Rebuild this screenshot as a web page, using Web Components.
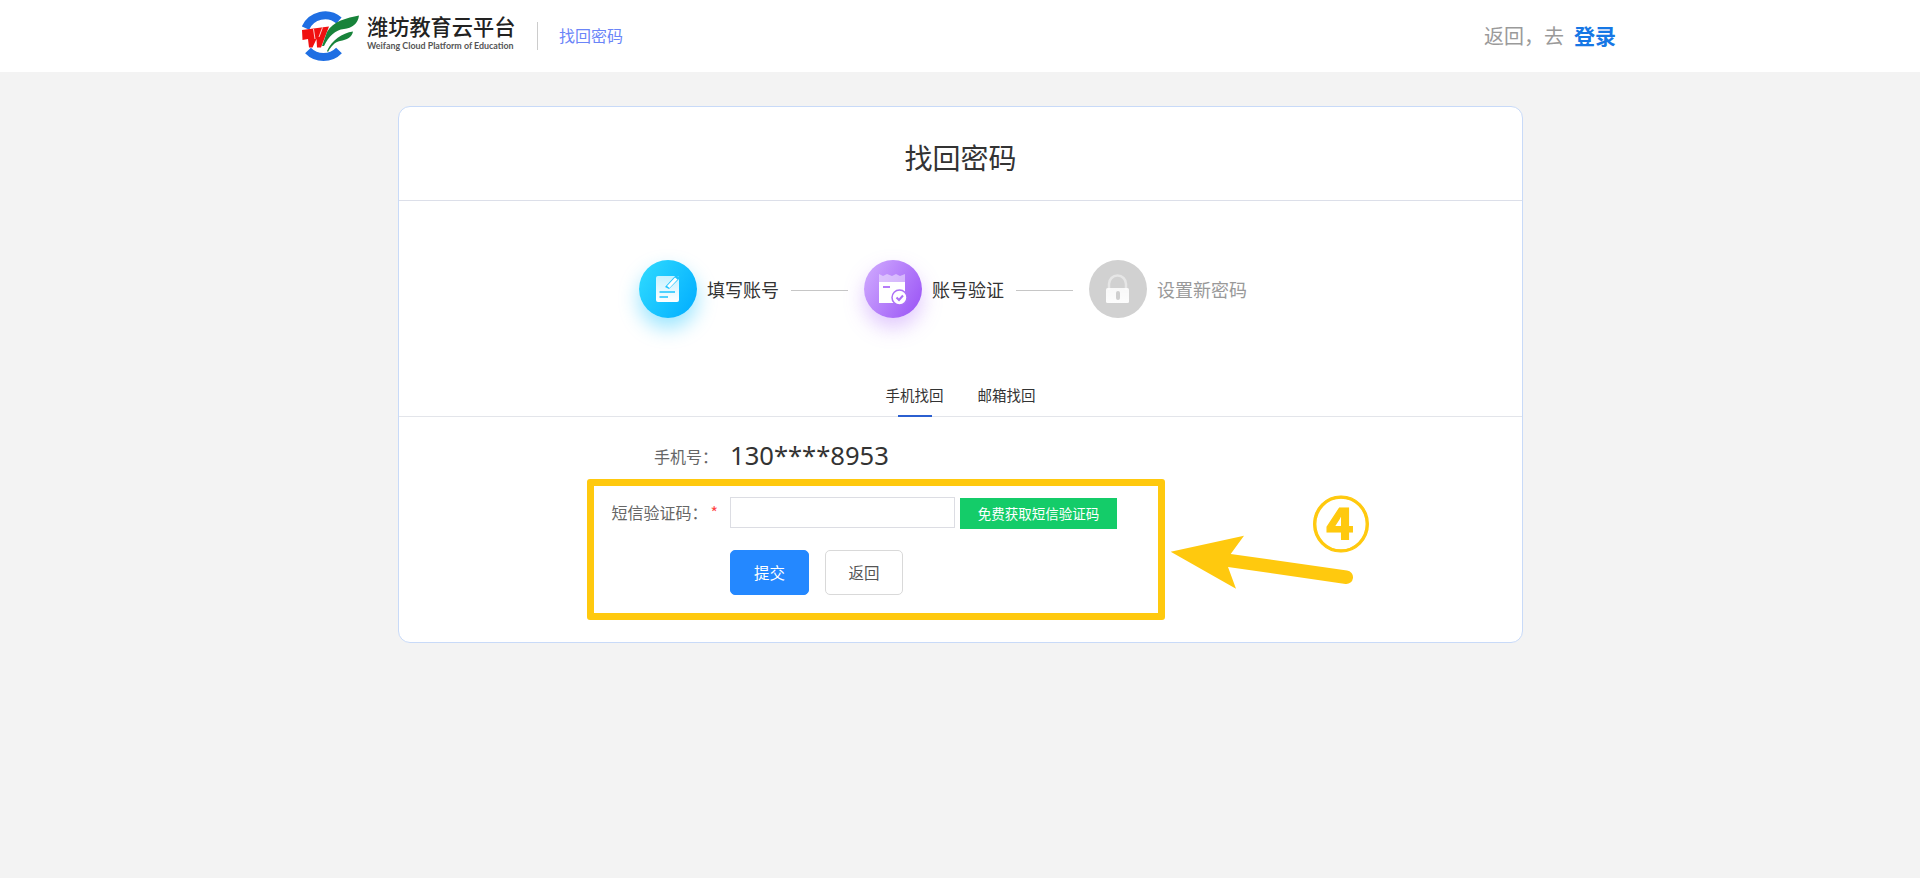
<!DOCTYPE html>
<html lang="zh">
<head>
<meta charset="utf-8">
<title>找回密码</title>
<style>
  html, body { margin: 0; height: 100%; }
  body {
    background: #f3f3f3;
    font-family: "Noto Sans CJK SC", "Noto Sans", sans-serif;
    color: #333;
  }
</style>
</head>
<body>
<app-header></app-header>
<recover-card>
  <step-item slot="steps" state="blue" label="填写账号"></step-item>
  <step-item slot="steps" state="purple" label="账号验证"></step-item>
  <step-item slot="steps" state="off" label="设置新密码"></step-item>
</recover-card>

<script>
class AppHeader extends HTMLElement {
  constructor() {
    super();
    this.attachShadow({ mode: "open" });
  }

  connectedCallback() {
    this.shadowRoot.innerHTML = /* html */`
    <style>
      :host { display: block; height: 72px; background: #fff; }
      .bar { display: flex; align-items: center; height: 72px; padding: 0 304px 0 302px; }
      .logo { display: block; width: 58px; height: 52px; margin-top: -1px; }
      .name { margin-left: 7px; width: 150px; white-space: nowrap; }
      .cn { font-size: 21.200px; line-height: 28px; color: #222; margin-top: -9px; font-weight: 500; }
      .en { font-size: 8.900px; line-height: 12px; color: #555; font-family: "Lato", sans-serif; font-weight: 700; }
      .sep { width: 1px; height: 28px; background: #ccc; margin-left: 20px; }
      .page { margin: -2px 0 0 21px; font-size: 16px; color: #6b85f8; }
      .right { margin: -2px 0 0 auto; font-size: 20px; color: #9a9a9a; display: flex; align-items: center; white-space: nowrap; }
      .right b { margin-left: 10px; font-size: 21px; color: #1677e5; font-weight: 700; }
    </style>
    <div class="bar">
      <svg class="logo" viewBox="0 0 58 52">
        <g fill="none" stroke="#1f6fe3" stroke-width="8">
          <path d="M3.500 18A21.500 21.500 0 0 1 37 10.500"/>
          <path d="M6 40.500A21.500 21.500 0 0 0 37 40.500"/>
        </g>
        <path d="M0 20L27 16.500L19 37.500L15 37.500L14.500 29L10.500 37.500L7 37.500L6 29L.5 30Z" fill="#f01010"/>
        <path d="M11.500 19L13 29M20.500 17.500L17 27" fill="none" stroke="#fff" stroke-width=".8"/>
        <path d="M20 36L25 22C31 11 45 8 57 5.500C56 14 50 18 42 19C33 20 27 26 22 36Z" fill="#17833a"/>
        <path d="M25 41C30 30 40 23 51 21.500C50 27 45 30 38 31C33 32 29 36 26 42Z" fill="#17833a"/>
      </svg>
      <div class="name">
        <div class="cn">潍坊教育云平台</div>
        <div class="en">Weifang Cloud Platform of Education</div>
      </div>
      <div class="sep"></div>
      <div class="page">找回密码</div>
      <div class="right">返回，去<b>登录</b></div>
    </div>`;
  }
}

class StepItem extends HTMLElement {
  constructor() {
    super();
    this.attachShadow({ mode: "open" });
  }

  get icon() {
    const state = this.getAttribute("state");
    if (state === "blue") return /* html */`
      <svg viewBox="0 0 58 58" width="58" height="58">
        <defs><linearGradient id="d" x1="0" y1="0" x2="0" y2="1"><stop offset="0" stop-color="#fff" stop-opacity=".75"/><stop offset="1" stop-color="#fff"/></linearGradient></defs>
        <rect x="17" y="16" width="23" height="26" rx="2" fill="url(#d)"/>
        <path d="M26 27L37 15L41 18L30 29Z" fill="#1cc3ff"/>
        <path d="M28 26L36 17.500L38.500 19.500L30.500 28Z" fill="#fff"/>
        <path d="M20.500 32H36M20.500 37H29" stroke="#1cc3ff" stroke-width="1.500" fill="none"/>
      </svg>`;
    if (state === "purple") return /* html */`
      <svg viewBox="0 0 58 58" width="58" height="58">
        <path d="M15 14L19 16L23 14L28 16L32 14L36 16L41 14V43H15Z" fill="#fff" opacity=".45"/>
        <rect x="15" y="22" width="26" height="21" fill="#fff"/>
        <rect x="19" y="26" width="7" height="2" fill="#b57cf8"/>
        <circle cx="35.500" cy="37.500" r="7.500" fill="#fff" stroke="#ac70f6" stroke-width="1.500"/>
        <path d="M32.500 37.500L35 40L39 35.500" fill="none" stroke="#ac70f6" stroke-width="2"/>
      </svg>`;
    return /* html */`
      <svg viewBox="0 0 58 58" width="58" height="58">
        <defs><linearGradient id="l" x1="0" y1="0" x2="0" y2="1"><stop offset="0" stop-color="#fff" stop-opacity=".85"/><stop offset="1" stop-color="#fff" stop-opacity=".95"/></linearGradient></defs>
        <path d="M20 30V24A8.500 8.500 0 0 1 37 24V30" fill="none" stroke="#fff" stroke-opacity=".45" stroke-width="2.500"/>
        <rect x="17" y="28" width="23" height="15" rx="1.500" fill="url(#l)"/>
        <rect x="27" y="31" width="4" height="9" rx="2" fill="#cfcfcf"/>
      </svg>`;
  }

  connectedCallback() {
    this.shadowRoot.innerHTML = /* html */`
    <style>
      :host { display: flex; align-items: center; font-size: 18px; color: #333; }
      :host([state="off"]) { color: #999; }
      .dot { width: 58px; height: 58px; border-radius: 50%; flex: none; }
      :host([state="blue"]) .dot {
        background: linear-gradient(120deg, #30dcff, #00acff);
        box-shadow: 0 10px 20px rgba(0, 190, 255, .4);
      }
      :host([state="purple"]) .dot {
        background: linear-gradient(120deg, #d2aeff, #9850f5);
        box-shadow: 0 10px 20px rgba(170, 100, 250, .35);
      }
      :host([state="off"]) .dot { background: #d1d1d1; }
      svg { display: block; }
      span { margin-left: 10px; line-height: 58px; white-space: nowrap; }
    </style>
    <div class="dot">${this.icon}</div>
    <span>${this.getAttribute("label")}</span>`;
  }
}

class FormRow extends HTMLElement {
  constructor() {
    super();
    this.attachShadow({ mode: "open" });
  }

  connectedCallback() {
    const label = this.getAttribute("label");
    const star = this.hasAttribute("required") ? `<i>*</i>` : "";
    this.shadowRoot.innerHTML = /* html */`
    <style>
      :host { display: flex; align-items: center; }
      .label { width: 319px; margin-right: 12px; text-align: right; font-size: 16px; color: #666; white-space: nowrap; }
      :host([required]) { align-items: flex-start; }
      :host([required]) .label { line-height: 30px; }
      i { font-style: normal; color: #f44; margin-left: 3px; }
      .value { display: flex; align-items: flex-start; }
    </style>
    <div class="label">${label}${star}</div>
    <div class="value"><slot></slot></div>`;
  }
}

class CallOut extends HTMLElement {
  constructor() {
    super();
    this.attachShadow({ mode: "open" });
  }

  connectedCallback() {
    this.shadowRoot.innerHTML = /* html */`
    <style>
      :host { position: absolute; left: 0; top: 0; width: 100%; height: 100%; pointer-events: none; }
      .box { position: absolute; left: 188px; top: 372px; width: 578px; height: 141px; box-sizing: border-box; border: 7px solid #ffc90e; border-radius: 3px; }
      svg { position: absolute; left: 768px; top: 425px; }
      .num { position: absolute; left: 904px; top: 371px; width: 76px; text-align: center; font-size: 58px; line-height: 86px; font-weight: 700; color: #ffc90e; -webkit-text-stroke: 1.200px #ffc90e; }
    </style>
    <div class="box"></div>
    <svg width="190" height="70" viewBox="0 0 190 70">
      <path d="M3.700 19.700L77 3.700L63.700 22L180 38.500A6.500 6.500 0 0 1 178.500 52L61 35L69 56.700Z" fill="#ffc90e"/>
    </svg>
    <div class="num">④</div>`;
  }
}

class RecoverCard extends HTMLElement {
  constructor() {
    super();
    this.attachShadow({ mode: "open" });
  }

  connectedCallback() {
    this.shadowRoot.innerHTML = /* html */`
    <style>
      :host {
        display: block; position: relative; box-sizing: border-box;
        width: 1125px; height: 537px; margin: 34px 0 0 398px;
        background: #fff; border: 1px solid #c8daf8; border-radius: 12px;
      }
      .title { height: 93px; line-height: 100px; text-align: center; font-size: 28px; color: #333; border-bottom: 1px solid #dcdfe9; }
      .steps { display: flex; align-items: center; height: 58px; margin-top: 59px; padding-left: 240px; }
      .line { width: 57px; height: 1px; background: #c6c6c6; margin: 3px 16px 0 12px; }
      .tabs { display: flex; justify-content: center; gap: 34px; margin-top: 44px; height: 55px; box-sizing: border-box; border-bottom: 1px solid #e3e5ea; }
      .tab { position: relative; font-size: 14.500px; line-height: 66px; height: 54px; color: #333; }
      .tab.on::after { content: ""; position: absolute; left: 12px; right: 12px; bottom: -1px; height: 2px; background: #2b5fd0; }
      .rows { margin-top: 14px; }
      .phone { font-family: "Noto Sans", sans-serif; font-size: 25.600px; line-height: 50px; color: #333; }
      form-row + form-row { margin-top: 16px; }
      .sms { width: 225px; height: 31px; box-sizing: border-box; border: 1px solid #dcdde3; background: #fff; }
      .send { width: 157px; height: 31px; margin: 1px 0 0 5px; background: #14cc69; color: #fff; font-size: 13.500px; line-height: 31px; text-align: center; }
      .acts { display: flex; gap: 16px; margin: 21px 0 0 331px; }
      .btn { width: 79px; height: 45px; box-sizing: border-box; border-radius: 5px; font-size: 15.500px; line-height: 43px; text-align: center; }
      .ok { background: #2488ff; border: 1px solid #2488ff; color: #fff; }
      .back { width: 78px; background: #fff; border: 1px solid #d9d9d9; color: #555; }
    </style>
    <div class="title">找回密码</div>
    <div class="steps" id="steps"></div>
    <div class="tabs">
      <div class="tab on">手机找回</div>
      <div class="tab">邮箱找回</div>
    </div>
    <div class="rows">
      <form-row label="手机号："><span class="phone">130****8953</span></form-row>
      <form-row label="短信验证码：" required><div class="sms"></div><div class="send">免费获取短信验证码</div></form-row>
      <div class="acts">
        <div class="btn ok">提交</div>
        <div class="btn back">返回</div>
      </div>
    </div>
    <call-out></call-out>`;

    // steps are passed in by the page, lines go between them
    const row = this.shadowRoot.getElementById("steps");
    [...this.querySelectorAll("step-item")].forEach((step, i) => {
      if (i) {
        const line = document.createElement("div");
        line.className = "line";
        row.append(line);
      }
      const slot = document.createElement("slot");
      slot.name = "s" + i;
      step.slot = "s" + i;
      row.append(slot);
    });
  }
}

customElements.define("app-header", AppHeader);
customElements.define("step-item", StepItem);
customElements.define("form-row", FormRow);
customElements.define("call-out", CallOut);
customElements.define("recover-card", RecoverCard);
</script>
</body>
</html>
